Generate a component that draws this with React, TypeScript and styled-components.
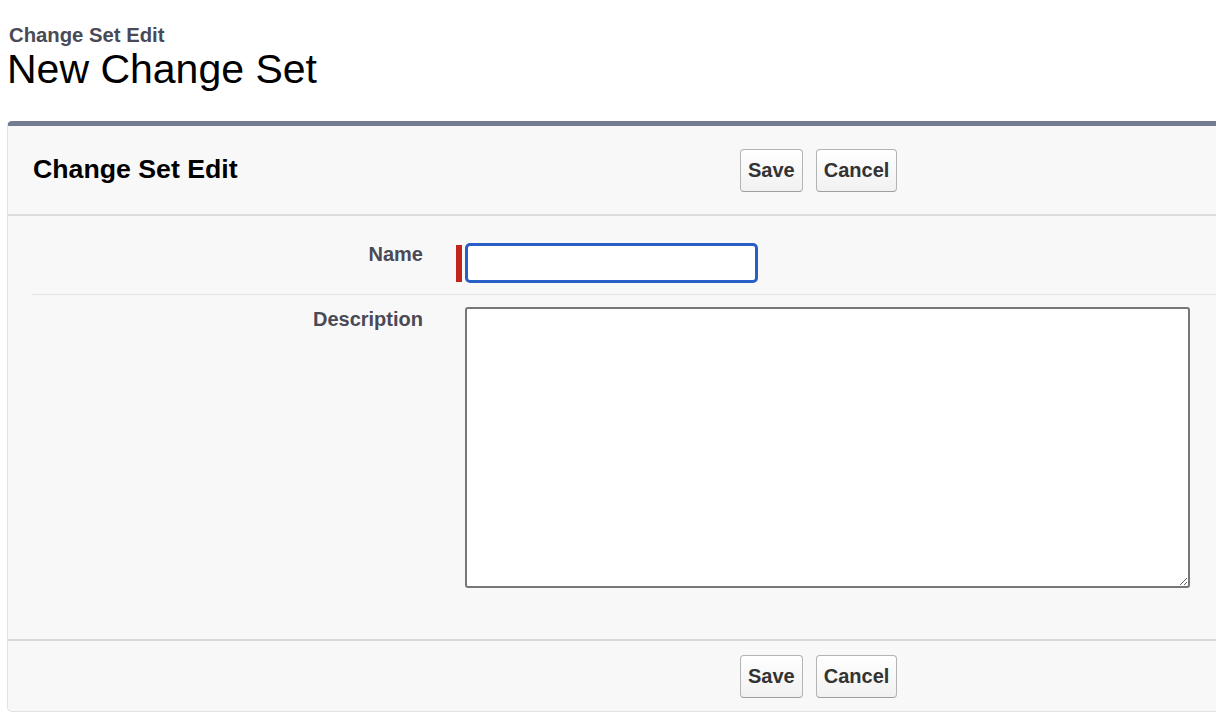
import { createGlobalStyle, styled } from 'styled-components';

const GlobalStyle = createGlobalStyle`
    html, body {
        margin: 0;
        padding: 0;
        background: #ffffff;
        overflow: hidden;
        font-family: "Liberation Sans", Arial, Helvetica, sans-serif;
    }
`;

const Page = styled.div`
    display: flex;
    flex-direction: column;
    padding: 24px 0 0 7px;
`;

const PageType = styled.div`
    font-size: 20.3px;
    line-height: 22px;
    font-weight: 700;
    color: #4a4a56;
    padding-left: 2px;
`;

const PageTitle = styled.h1`
    margin: 0;
    font-size: 41px;
    line-height: 46px;
    font-weight: 400;
    color: #000000;
`;

const Panel = styled.div`
    display: flex;
    flex-direction: column;
    width: 1240px;
    margin-top: 29px;
    background: #f8f8f8;
    border-top: 5px solid #747c91;
    border-left: 1px solid #e2e2e2;
    border-bottom: 1px solid #e2e2e2;
    border-radius: 5px 0 0 5px;
`;

const Header = styled.div`
    display: flex;
    align-items: center;
    height: 88px;
    padding-left: 25px;
    border-bottom: 2px solid #dcdcdc;
`;

const HeaderTitle = styled.h2`
    margin: 0;
    width: 707px;
    font-size: 26.7px;
    font-weight: 700;
    color: #000000;
    margin-top: -1px;
`;

const Buttons = styled.div<{ $offset: number }>`
    display: flex;
    gap: 13px;
    margin-left: ${({ $offset }) => $offset}px;
`;

const Button = styled.button`
    height: 43px;
    padding: 0 7px;
    font-family: "Liberation Sans", Arial, Helvetica, sans-serif;
    font-size: 20px;
    font-weight: 700;
    color: #333333;
    background: linear-gradient(#ffffff, #f1f1f1);
    border: 1px solid #b4b4b4;
    border-bottom-color: #9f9f9f;
    border-radius: 4px;
`;

const Body = styled.div`
    display: flex;
    flex-direction: column;
    padding-bottom: 51px;
    border-bottom: 2px solid #d8d8d8;
`;

const Row = styled.div<{ $top: number; $divider?: boolean }>`
    display: flex;
    align-items: flex-start;
    margin-left: 24px;
    padding-top: ${({ $top }) => $top}px;
    padding-bottom: ${({ $divider }) => ($divider ? 11 : 0)}px;
    border-bottom: ${({ $divider }) => ($divider ? '1px solid #e3e3e3' : 'none')};
`;

const Label = styled.label<{ $shift: number }>`
    width: 391px;
    margin-top: ${({ $shift }) => $shift}px;
    text-align: right;
    font-size: 20px;
    line-height: 24px;
    font-weight: 700;
    color: #4a4a56;
`;

const Field = styled.div`
    display: flex;
    align-items: center;
    gap: 3px;
    margin-left: 33px;
`;

const Required = styled.div`
    width: 6px;
    height: 37px;
    background: #c0261c;
`;

const Input = styled.input`
    box-sizing: border-box;
    width: 293px;
    height: 40px;
    border: 3px solid #2a5ec7;
    border-radius: 5px;
    background: #ffffff;
    outline: none;
`;

const TextArea = styled.textarea`
    box-sizing: border-box;
    width: 725px;
    height: 281px;
    margin-left: 9px;
    border: 2px solid #777777;
    border-radius: 3px;
    background: #ffffff;
    outline: none;
    resize: both;
`;

const Footer = styled.div`
    display: flex;
    align-items: center;
    height: 70px;
    padding-left: 25px;
`;

export default function App() {
    return (
        <>
            <GlobalStyle />
            <Page>
                <PageType>Change Set Edit</PageType>
                <PageTitle>New Change Set</PageTitle>
                <Panel>
                    <Header>
                        <HeaderTitle>Change Set Edit</HeaderTitle>
                        <Buttons $offset={0}>
                            <Button>Save</Button>
                            <Button>Cancel</Button>
                        </Buttons>
                    </Header>
                    <Body>
                        <Row $top={27} $divider>
                            <Label $shift={-1}>Name</Label>
                            <Field>
                                <Required />
                                <Input />
                            </Field>
                        </Row>
                        <Row $top={12}>
                            <Label $shift={0}>Description</Label>
                            <Field>
                                <TextArea />
                            </Field>
                        </Row>
                    </Body>
                    <Footer>
                        <Buttons $offset={707}>
                            <Button>Save</Button>
                            <Button>Cancel</Button>
                        </Buttons>
                    </Footer>
                </Panel>
            </Page>
        </>
    );
}
